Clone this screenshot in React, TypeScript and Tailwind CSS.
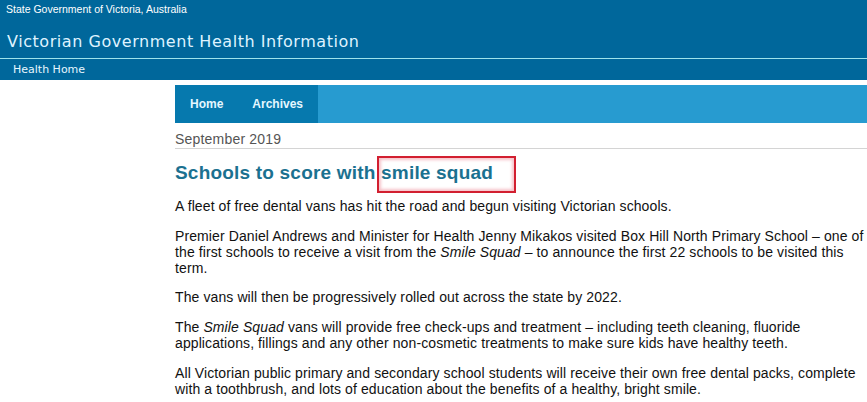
export default function App() {
  return (
    <div className="w-[867px] h-[402px] overflow-hidden bg-white font-['Liberation_Sans',Arial,sans-serif]">
      {/* Banner */}
      <header className="bg-[#00679b] h-[58px] flex flex-col">
        <div className="pl-[6px] pt-[3px] text-[10.5px] leading-[13px] text-white">State Government of Victoria, Australia</div>
        <h1 className="pl-[7px] pt-[16px] text-[16px] leading-[20px] tracking-[0.55px] text-[#dff3ff] font-['DejaVu_Sans',Verdana,sans-serif]">
          Victorian Government Health Information
        </h1>
      </header>
      <div className="h-px bg-[#9ee4ec]" />
      <nav className="bg-[#00679b] h-[21px] pl-[13px] text-[11px] leading-[21px] text-[#e6f6ff] font-['DejaVu_Sans',Verdana,sans-serif]">
        Health Home
      </nav>

      <div className="flex pt-[5px]">
        <aside className="w-[175px] shrink-0" />
        <main className="flex-1">
          <div className="h-[38px] bg-[#279bd0] flex">
            <div className="w-[143px] bg-[#0679ae] flex items-center text-[12px] font-bold text-[#e4f7ff]">
              <span className="pl-[15px]">Home</span>
              <span className="pl-[29px]">Archives</span>
            </div>
          </div>

          <div>
            <div className="mt-[9px] pb-px border-b border-[#d4d4d4] text-[14px] leading-[15px] tracking-[0.2px] text-[#555]">
              September 2019
            </div>

            <h2 className="relative mt-[13px] text-[19px] leading-[22px] tracking-[0.2px] font-bold text-[#1b7190]">
              Schools to score with smile squad
              <span className="absolute left-[202px] top-[-6px] w-[139px] h-[37px] border-2 border-[#d21f30] shadow-[inset_0_0_3px_2px_rgba(230,80,100,0.35)]" />
            </h2>

            <div className="w-[690px] text-[14px] leading-[16px] tracking-[0.1px] text-[#111]">
              <p className="mt-[14px]">A fleet of free dental vans has hit the road and begun visiting Victorian schools.</p>
              <p className="mt-[14px]">
                Premier Daniel Andrews and Minister for Health Jenny Mikakos visited Box Hill North Primary School – one of the first schools to receive a visit from the <em>Smile Squad</em> – to announce the first 22 schools to be visited this term.
              </p>
              <p className="mt-[13px]">The vans will then be progressively rolled out across the state by 2022.</p>
              <p className="mt-[14px]">
                The <em>Smile Squad</em> vans will provide free check-ups and treatment – including teeth cleaning, fluoride applications, fillings and any other non-cosmetic treatments to make sure kids have healthy teeth.
              </p>
              <p className="mt-[14px]">
                All Victorian public primary and secondary school students will receive their own free dental packs, complete with a toothbrush, and lots of education about the benefits of a healthy, bright smile.
              </p>
            </div>
          </div>
        </main>
      </div>
    </div>
  );
}
